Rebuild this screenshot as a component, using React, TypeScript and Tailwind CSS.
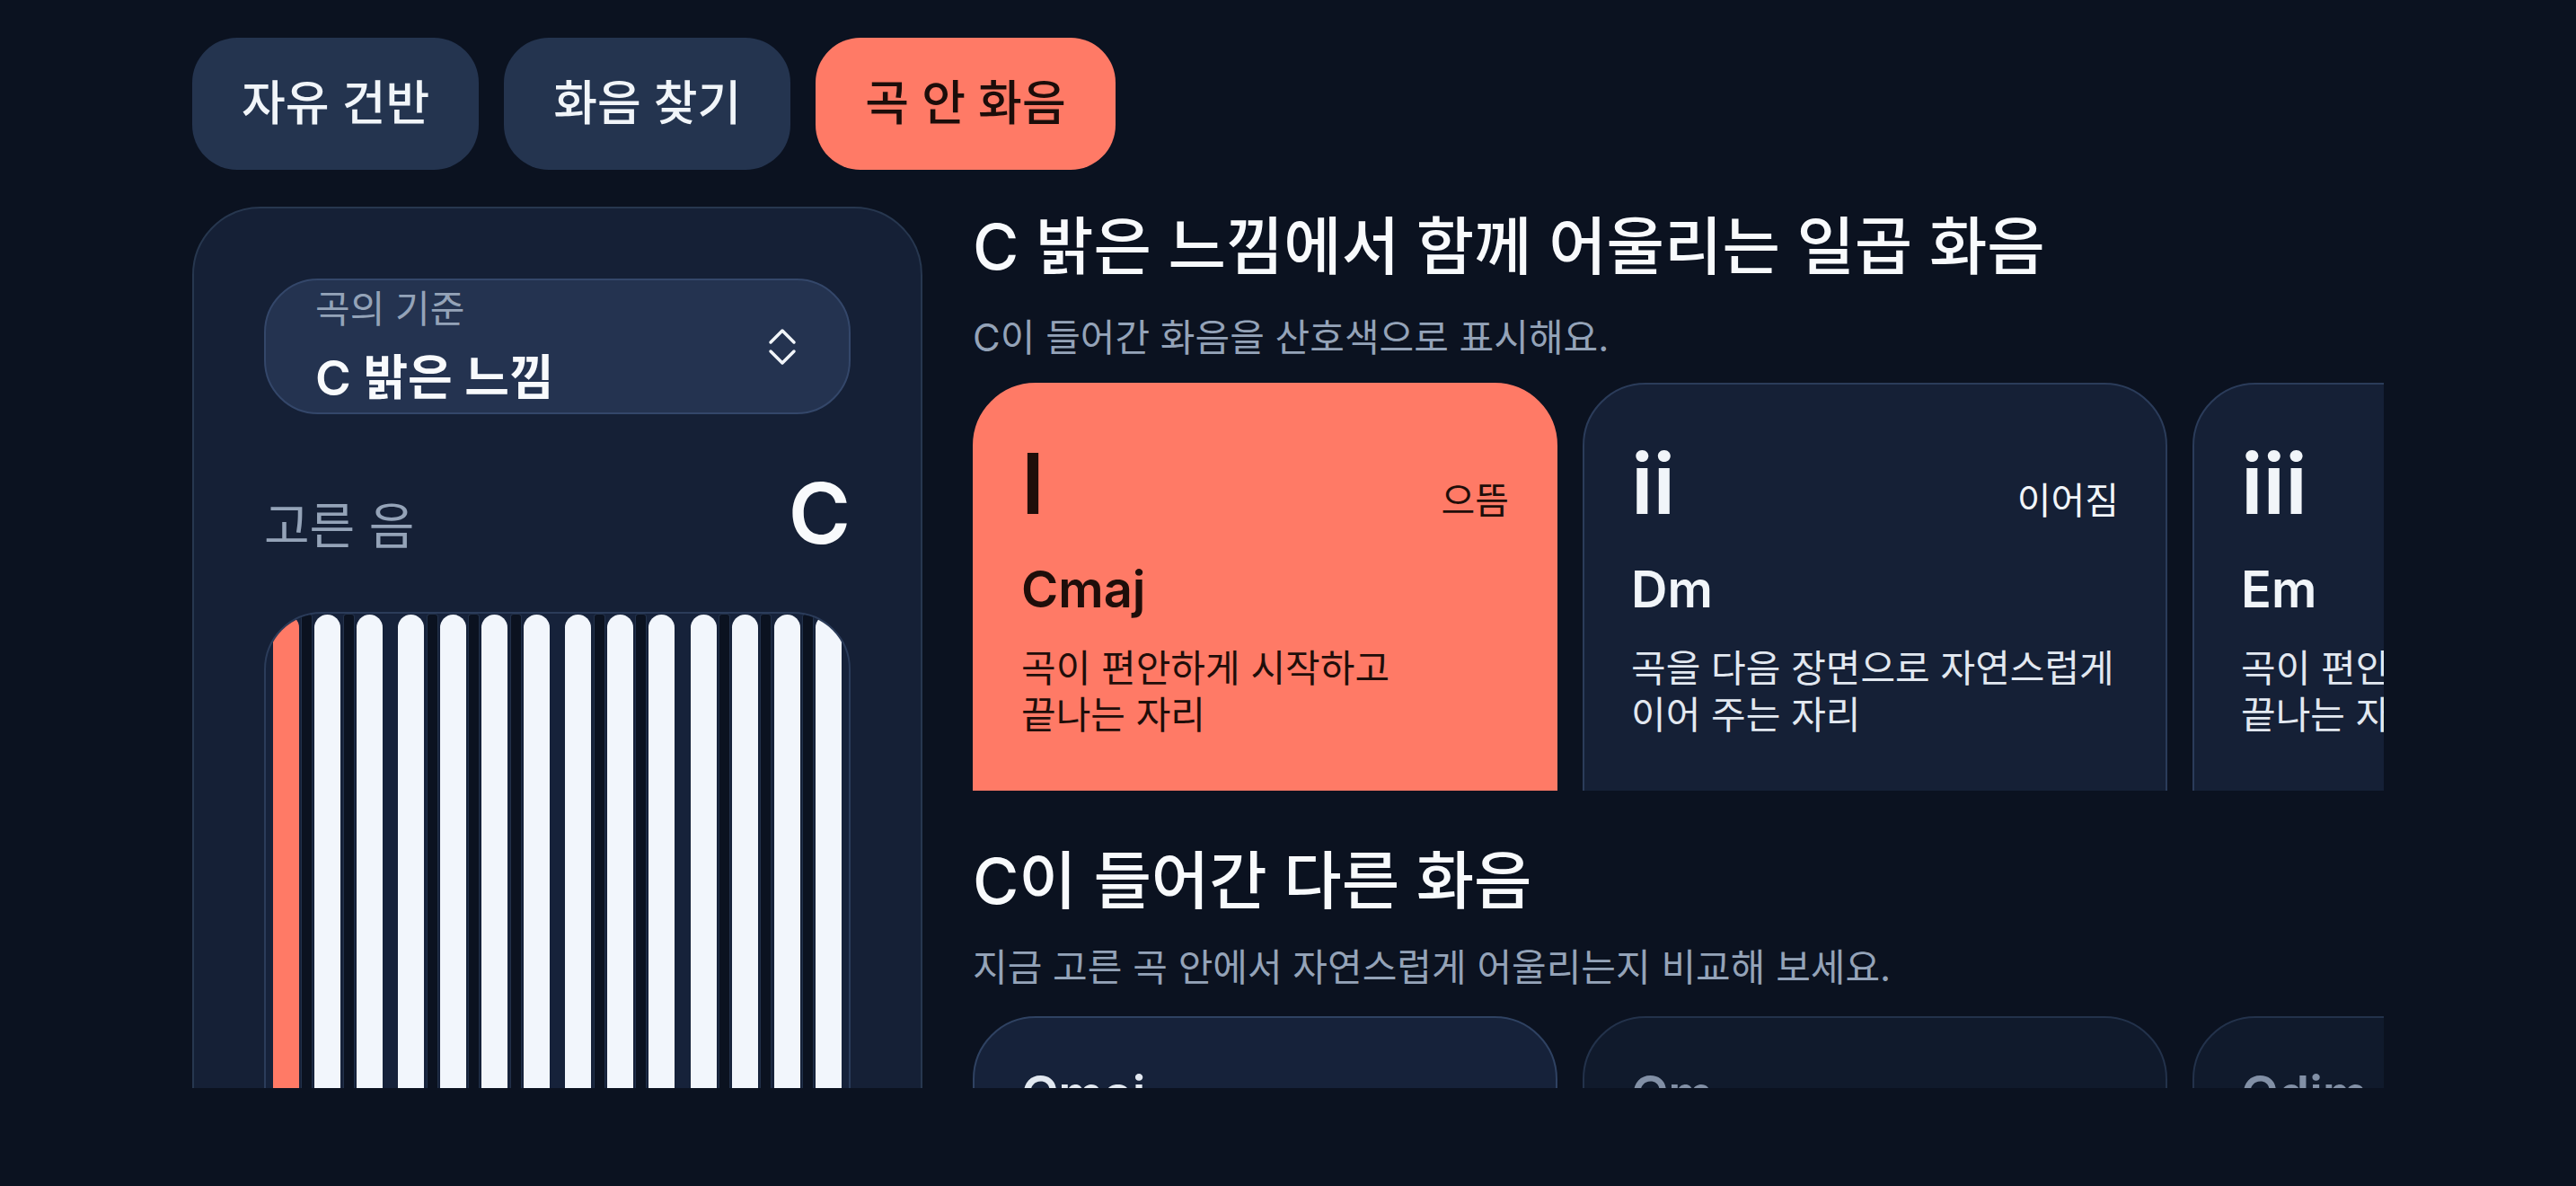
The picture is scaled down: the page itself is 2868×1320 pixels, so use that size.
import React from 'react';

type Chord = {
  numeral: string;
  role: string;
  name: string;
  desc: string[];
  active?: boolean;
};

type OtherChord = {
  name: string;
  desc: string[];
  inKey: boolean;
};

const tabs = ['자유 건반', '화음 찾기', '곡 안 화음'];

const keyChords: Chord[] = [
  { numeral: 'I', role: '으뜸', name: 'Cmaj', desc: ['곡이 편안하게 시작하고', '끝나는 자리'], active: true },
  { numeral: 'ii', role: '이어짐', name: 'Dm', desc: ['곡을 다음 장면으로 자연스럽게', '이어 주는 자리'] },
  { numeral: 'iii', role: '으뜸 대신', name: 'Em', desc: ['곡이 편안하게 시작하고', '끝나는 자리'] },
  { numeral: 'IV', role: '버금딸림', name: 'Fmaj', desc: ['곡을 밖으로 조금', '열어 주는 자리'] },
  { numeral: 'V', role: '딸림', name: 'Gmaj', desc: ['으뜸으로 돌아가고 싶게', '만드는 자리'] },
  { numeral: 'vi', role: '으뜸 대신', name: 'Am', desc: ['곡이 편안하게 시작하고', '끝나는 자리'] },
  { numeral: 'vii°', role: '딸림 대신', name: 'Bdim', desc: ['긴장을 만들어', '으뜸으로 보내는 자리'] },
];

const otherChords: OtherChord[] = [
  { name: 'Cmaj', desc: ['지금 곡 안의 화음'], inKey: true },
  { name: 'Cm', desc: ['곡 밖에서 빌려 온 화음'], inKey: false },
  { name: 'Cdim', desc: ['곡 밖에서 빌려 온 화음'], inKey: false },
  { name: 'Caug', desc: ['곡 밖에서 빌려 온 화음'], inKey: false },
];

// black key sits after these white keys inside an octave (C D F G A)
const BLACK_AFTER = [0, 1, 3, 4, 5];

const ChevronsUpDown = () => (
  <svg width="32" height="44" viewBox="0 0 32 44" fill="none" stroke="#f1f5f9" strokeWidth="3.5" strokeLinecap="round" strokeLinejoin="round">
    <path d="M3 17 L16 4 L29 17" />
    <path d="M3 27 L16 40 L29 27" />
  </svg>
);

const Keyboard: React.FC = () => {
  const whites = Array.from({ length: 14 }, (_, i) => i);
  return (
    <div className="mt-[63px] h-[720px] overflow-hidden rounded-[64px] border-2 border-[#2b3c5a] bg-[#16223a] px-[8px] pt-[1px]">
      <div className="flex h-full">
        {whites.map((i) => (
          <React.Fragment key={i}>
            <div className={`h-full w-[29px] shrink-0 rounded-t-full ${i === 0 ? 'bg-[#ff7a66]' : 'bg-[#f2f6fc]'}`} />
            {i < 13 && (
              <div className="flex h-full flex-1 justify-center">
                {BLACK_AFTER.includes(i % 7) && (
                  <div className="h-full w-[11px] rounded-t-[3px] bg-[#0b1220] ring-1 ring-[#22314a]" />
                )}
              </div>
            )}
          </React.Fragment>
        ))}
      </div>
    </div>
  );
};

const SidePanel: React.FC = () => (
  <aside className="h-[1200px] w-[813px] shrink-0 rounded-[76px] border-2 border-[#27374f] bg-[#152036] px-[78px] pt-[78px]">
    <div className="flex h-[151px] items-center justify-between rounded-[60px] border-2 border-[#34476a] bg-[#243350] pl-[55px] pr-[58px]">
      <div className="flex flex-col">
        <span className="text-[42px] leading-[46px] text-[#94a3b8]">곡의 기준</span>
        <span className="mt-[24px] text-[54px] font-semibold leading-[60px] text-[#f8fafc]">C 밝은 느낌</span>
      </div>
      <ChevronsUpDown />
    </div>

    <div className="mt-[63px] flex items-baseline justify-between">
      <span className="text-[55px] leading-[60px] text-[#94a3b8]">고른 음</span>
      <span className="text-[94px] font-semibold leading-[94px] text-[#f8fafc]">C</span>
    </div>

    <Keyboard />
  </aside>
);

const ChordCard: React.FC<{ chord: Chord }> = ({ chord }) => (
  <div
    className={`h-[540px] w-[651px] shrink-0 rounded-[70px] border-2 px-[52px] pt-[63px] ${
      chord.active
        ? 'border-[#ff7a66] bg-[#ff7a66] text-[#1f0e0a]'
        : 'border-[#2b3c5a] bg-[#152036] text-[#f1f5f9]'
    }`}
  >
    <div className="flex items-baseline justify-between">
      <span className="text-[94px] font-semibold leading-[94px]">{chord.numeral}</span>
      <span className="text-[41px] leading-[44px]">{chord.role}</span>
    </div>
    <div className="mt-[38px] text-[56px] font-semibold leading-[67px]">{chord.name}</div>
    <p className={`mt-[28px] whitespace-nowrap text-[42px] leading-[52px] ${chord.active ? '' : 'text-[#e2e8f0]'}`}>
      {chord.desc.map((line, i) => (
        <React.Fragment key={i}>
          {i > 0 && <br />}
          {line}
        </React.Fragment>
      ))}
    </p>
  </div>
);

const OtherCard: React.FC<{ chord: OtherChord }> = ({ chord }) => (
  <div
    className={`h-[400px] w-[651px] shrink-0 rounded-[70px] border-2 px-[52px] pt-[52px] ${
      chord.inKey ? 'border-[#2f4262] bg-[#16223a] text-[#e2e8f0]' : 'border-[#23324b] bg-[#101a2c] text-[#8290a6]'
    }`}
  >
    <div className="text-[56px] font-semibold leading-[67px]">{chord.name}</div>
    <p className="mt-[28px] whitespace-nowrap text-[42px] leading-[52px]">{chord.desc[0]}</p>
  </div>
);

export default function App() {
  return (
    <div className="h-[1320px] w-full overflow-hidden bg-[#0b1220] px-[214px] pt-[42px] font-[family-name:Inter,'Noto_Sans_CJK_KR',sans-serif] text-[#f1f5f9]">
      <nav className="flex gap-[28px]">
        {tabs.map((tab, i) => {
          const active = i === 2;
          return (
            <button
              key={tab}
              className={`flex h-[147px] items-center rounded-[50px] px-[55px] text-[53px] font-medium leading-[53px] ${
                active ? 'bg-[#ff7a66] text-[#1c0d0a]' : 'bg-[#24344f] text-[#f1f5f9]'
              }`}
            >
              {tab}
            </button>
          );
        })}
      </nav>

      <div className="mt-[41px] flex h-[981px] gap-[56px] overflow-hidden">
        <SidePanel />

        <main className="min-w-0 flex-1 overflow-hidden">
          <h2 className="mt-[5px] whitespace-nowrap text-[70px] font-medium leading-[80px] text-[#f8fafc]">
            C 밝은 느낌에서 함께 어울리는 일곱 화음
          </h2>
          <p className="mt-[35px] text-[42px] leading-[52px] text-[#94a3b8]">C이 들어간 화음을 산호색으로 표시해요.</p>

          <div className="mt-[24px] flex h-[454px] gap-[28px] overflow-hidden">
            {keyChords.map((c) => (
              <ChordCard key={c.numeral} chord={c} />
            ))}
          </div>

          <h2 className="mt-[61px] whitespace-nowrap text-[70px] font-medium leading-[80px] text-[#f8fafc]">
            C이 들어간 다른 화음
          </h2>
          <p className="mt-[30px] text-[42px] leading-[52px] text-[#94a3b8]">
            지금 고른 곡 안에서 자연스럽게 어울리는지 비교해 보세요.
          </p>

          <div className="mt-[28px] flex gap-[28px]">
            {otherChords.map((c) => (
              <OtherCard key={c.name} chord={c} />
            ))}
          </div>
        </main>
      </div>
    </div>
  );
}
